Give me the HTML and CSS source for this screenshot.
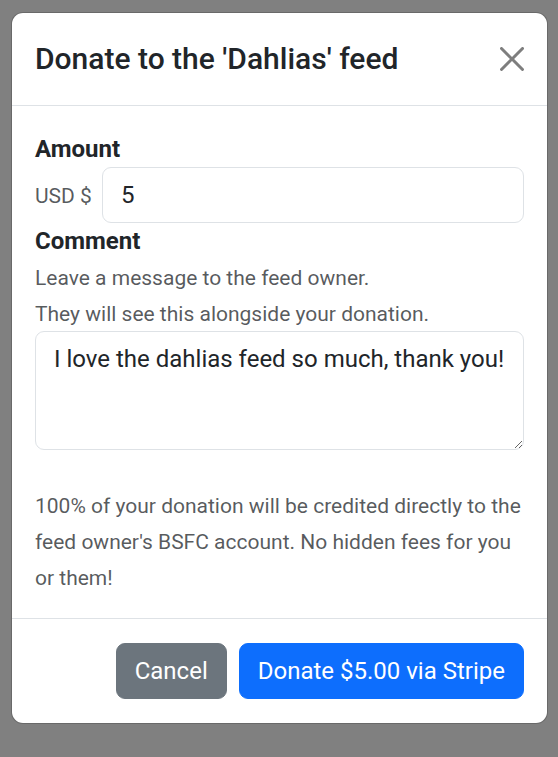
FILE: index.html
```html
<!DOCTYPE html>
<html lang="en">
<head>
<meta charset="utf-8">
<title>Donate</title>
<link rel="stylesheet" href="styles.css">
</head>
<body>
<div class="modal">
  <div class="modal-header">
    <h5 class="modal-title">Donate to the 'Dahlias' feed</h5>
    <button class="btn-close" type="button" aria-label="Close">
      <svg viewBox="0 0 16 16" width="24" height="24"><path fill="#000" d="M.293.293a1 1 0 0 1 1.414 0L8 6.586 14.293.293a1 1 0 1 1 1.414 1.414L9.414 8l6.293 6.293a1 1 0 0 1-1.414 1.414L8 9.414l-6.293 6.293a1 1 0 0 1-1.414-1.414L6.586 8 .293 1.707a1 1 0 0 1 0-1.414z"/></svg>
    </button>
  </div>
  <div class="modal-body">
    <label class="field-label" for="amount">Amount</label>
    <div class="amount-row">
      <span class="currency">USD $</span>
      <input id="amount" class="form-control" type="text" value="5">
    </div>
    <label class="field-label" for="comment">Comment</label>
    <p class="hint"><small>Leave a message to the feed owner.<br>They will see this alongside your donation.</small></p>
    <textarea id="comment" class="form-control comment">I love the dahlias feed so much, thank you!</textarea>
    <p class="note"><small>100% of your donation will be credited directly to the feed owner's BSFC account. No hidden fees for you or them!</small></p>
  </div>
  <div class="modal-footer">
    <button type="button" class="btn btn-secondary">Cancel</button>
    <button type="button" class="btn btn-primary">Donate $5.00 via Stripe</button>
  </div>
</div>
</body>
</html>
```
FILE: styles.css
```css
html { font-size: 24px; }
body {
  margin: 0;
  background: #808080;
  font-family: Roboto, "Liberation Sans", sans-serif;
  font-size: 24px;
  line-height: 1.5;
  color: #212529;
}
.modal {
  margin: 12px 11px;
  width: 537px;
  box-sizing: border-box;
  background: #fff;
  background-clip: padding-box;
  border: 1px solid rgba(0,0,0,.175);
  border-radius: 12px;
}
.modal-header {
  display: flex;
  align-items: center;
  padding: 23px 23px 24px;
  border-bottom: 1px solid #dee2e6;
}
.modal-title {
  margin: 0;
  font-size: 30px;
  font-weight: 500;
  line-height: 1.5;
}
.btn-close {
  box-sizing: content-box;
  width: 24px;
  height: 24px;
  padding: 6px;
  margin: -12px -6px -12px auto;
  border: 0;
  background: transparent;
  opacity: .5;
  display: flex;
  align-items: center;
  justify-content: center;
}
.btn-close svg { display: block; }
.modal-body { padding: 25px 23px 23px; }
.field-label { display: block; font-weight: 700; }
.amount-row { display: flex; align-items: baseline; gap: 10px; }
.currency { font-size: 21px; color: rgba(33,37,41,.75); }
.form-control {
  display: block;
  width: 100%;
  box-sizing: border-box;
  margin: 0;
  padding: 9px 18px;
  font-family: inherit;
  font-size: 24px;
  line-height: 1.5;
  color: #212529;
  background: #fff;
  border: 1px solid #dee2e6;
  border-radius: 9px;
}
.amount-row .form-control { flex: 1; }
.comment { height: 119px; padding: 9px 14px 9px 18px; resize: vertical; }
.hint { margin: 0; color: rgba(33,37,41,.75); }
.hint small, .note small { font-size: 21px; }
.note { margin: 37px 0 0; color: rgba(33,37,41,.75); }
.modal-footer {
  display: flex;
  justify-content: flex-end;
  align-items: center;
  padding: 18px 17px;
  border-top: 1px solid #dee2e6;
}
.modal-footer > .btn { margin: 6px; }
.btn {
  font-family: inherit;
  font-size: 24px;
  line-height: 1.5;
  padding: 9px 18px;
  border: 1px solid transparent;
  border-radius: 9px;
  color: #fff;
}
.btn-secondary { background: #6c757d; border-color: #6c757d; }
.btn-primary { background: #0d6efd; border-color: #0d6efd; }
```
